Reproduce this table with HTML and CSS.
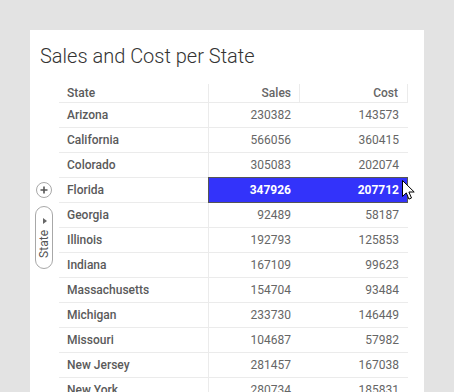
FILE: index.html
```html
<!DOCTYPE html>
<html lang="en">
<head>
    <meta charset="UTF-8">
    <meta name="viewport" content="width=device-width, initial-scale=1.0">
    <title>Sales and Cost per State</title>
    <link rel="stylesheet" href="styles.css">
</head>
<body>
    <div class="card">
        <h1 class="card-title">Sales and Cost per State</h1>
        <div class="viz">
            <div class="axis">
                <div class="axis-add">
                    <svg width="16" height="16" viewBox="0 0 16 16">
                        <circle cx="8" cy="8" r="7.5" fill="#fff" stroke="#a8a8a8"/>
                        <path d="M8 4.5v7M4.5 8h7" stroke="#555" stroke-width="1.6"/>
                    </svg>
                </div>
                <div class="axis-pill">
                    <span class="axis-arrow"></span>
                    <span class="axis-label">State</span>
                </div>
            </div>
            <div class="grid">
                <div class="row head">
                    <div class="cell c-state">State</div>
                    <div class="cell c-num">Sales</div>
                    <div class="cell c-cost">Cost</div>
                </div>
                <div class="row"><div class="cell c-state">Arizona</div><div class="cell c-num">230382</div><div class="cell c-cost">143573</div></div>
                <div class="row"><div class="cell c-state">California</div><div class="cell c-num">566056</div><div class="cell c-cost">360415</div></div>
                <div class="row"><div class="cell c-state">Colorado</div><div class="cell c-num">305083</div><div class="cell c-cost">202074</div></div>
                <div class="row selected"><div class="cell c-state">Florida</div><div class="cell c-num">347926</div><div class="cell c-cost">207712</div></div>
                <div class="row"><div class="cell c-state">Georgia</div><div class="cell c-num">92489</div><div class="cell c-cost">58187</div></div>
                <div class="row"><div class="cell c-state">Illinois</div><div class="cell c-num">192793</div><div class="cell c-cost">125853</div></div>
                <div class="row"><div class="cell c-state">Indiana</div><div class="cell c-num">167109</div><div class="cell c-cost">99623</div></div>
                <div class="row"><div class="cell c-state">Massachusetts</div><div class="cell c-num">154704</div><div class="cell c-cost">93484</div></div>
                <div class="row"><div class="cell c-state">Michigan</div><div class="cell c-num">233730</div><div class="cell c-cost">146449</div></div>
                <div class="row"><div class="cell c-state">Missouri</div><div class="cell c-num">104687</div><div class="cell c-cost">57982</div></div>
                <div class="row"><div class="cell c-state">New Jersey</div><div class="cell c-num">281457</div><div class="cell c-cost">167038</div></div>
                <div class="row"><div class="cell c-state">New York</div><div class="cell c-num">280734</div><div class="cell c-cost">185831</div></div>
            </div>
        </div>
        <svg class="pointer" width="14" height="21" viewBox="0 0 14 21">
            <path d="M0.5 0.5v16l3.8-3.6 2.6 6.2 2.6-1.1-2.6-6h5.3z" fill="#fff" stroke="#000" stroke-linejoin="round"/>
        </svg>
    </div>
</body>
</html>
```

FILE: styles.css
```css
body {
    margin: 0;
    padding: 0;
    background: #e3e3e3;
    font-family: Roboto, "Liberation Sans", sans-serif;
    overflow: hidden;
}
.card {
    position: relative;
    margin: 30px 0 0 30px;
    width: 394px;
    height: 362px;
    background: #fff;
    overflow: hidden;
}
.card-title {
    margin: 0;
    padding: 14px 0 0 10px;
    font-size: 20px;
    line-height: 24px;
    font-weight: 300;
    color: #333;
}
.viz {
    display: flex;
    margin-top: 16px;
}
.axis {
    width: 29px;
    padding: 98px 0 0 5px;
    box-sizing: border-box;
    display: flex;
    flex-direction: column;
    gap: 8px;
}
.axis-add {
    width: 16px;
    height: 16px;
    margin-left: 1px;
}
.axis-add svg {
    display: block;
}
.axis-pill {
    width: 18px;
    height: 63px;
    box-sizing: border-box;
    border: 1px solid #a8a8a8;
    border-radius: 9px;
    display: flex;
    flex-direction: column;
    align-items: center;
    padding-top: 11px;
    gap: 6px;
}
.axis-arrow {
    width: 0;
    height: 0;
    border-top: 3px solid transparent;
    border-bottom: 3px solid transparent;
    border-left: 4px solid #666;
    margin-left: 1px;
}
.axis-label {
    writing-mode: vertical-rl;
    transform: rotate(180deg);
    font-size: 12px;
    line-height: 16px;
    color: #555;
}
.grid {
    width: 349px;
}
.row {
    display: flex;
    height: 25px;
    box-sizing: border-box;
    border-bottom: 1px solid #ebebeb;
    font-size: 12px;
    color: #666;
}
.row.head {
    height: 19px;
}
.cell {
    box-sizing: border-box;
    padding: 1px 8px 0;
    line-height: 23px;
    white-space: nowrap;
}
.head .cell {
    line-height: 17px;
    font-weight: 500;
    border-right: 1px solid #ebebeb;
}
.c-state {
    width: 150px;
    border-right: 1px solid #ebebeb;
    font-weight: 500;
    color: #5a5a5a;
}
.c-num {
    width: 91px;
    text-align: right;
    border-right: 1px solid transparent;
}
.c-cost {
    width: 108px;
    text-align: right;
    padding-right: 9px;
}
.selected {
    position: relative;
}
.selected .c-num,
.selected .c-cost {
    background: #3333fa;
    color: #fff;
    font-weight: 700;
}
.selected::after {
    content: "";
    position: absolute;
    left: 149px;
    top: -1px;
    width: 200px;
    height: 26px;
    box-sizing: border-box;
    border: 1px solid #555;
}
.pointer {
    position: absolute;
    left: 372px;
    top: 150px;
}
```
